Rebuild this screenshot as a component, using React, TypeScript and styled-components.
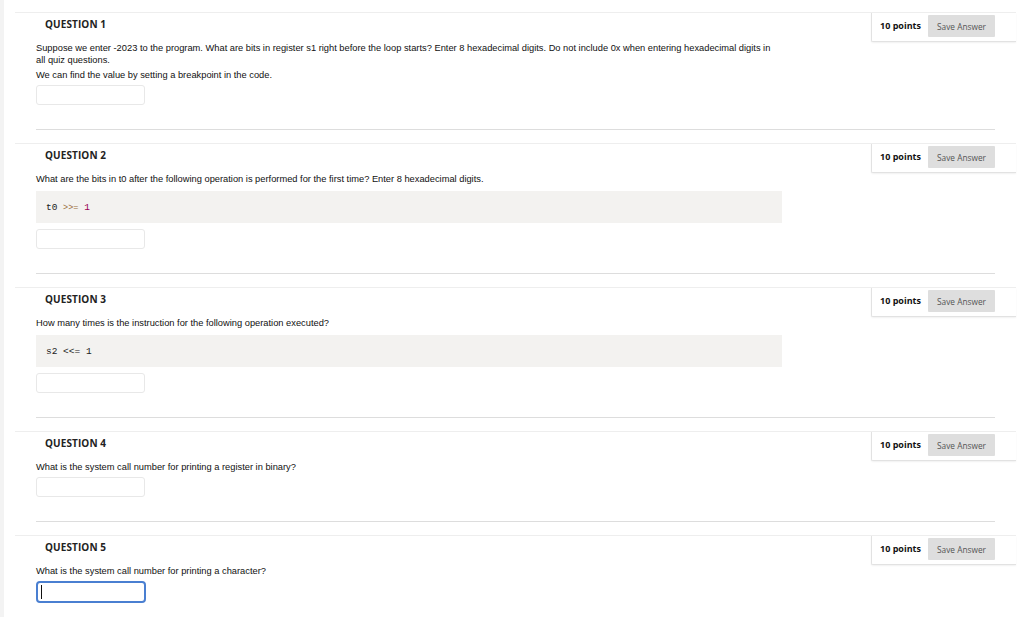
import React from "react";
import styled, { createGlobalStyle } from "styled-components";

const Global = createGlobalStyle`
  html, body { margin: 0; padding: 0; background: #ffffff; }
  body { font-family: "Liberation Sans", Arial, sans-serif; color: #111; }
  * { box-sizing: border-box; }
`;

const Page = styled.div`
  width: 1024px;
  min-height: 617px;
  border-left: 4px solid #f3f3f3;
  padding: 12px 8px 0 11px;
`;

const Question = styled.section`
  margin-bottom: 13px;
`;

const Header = styled.header`
  display: flex;
  justify-content: space-between;
  align-items: flex-start;
  border-top: 1px solid #eeeeee;
  height: 30px;
`;

const Title = styled.h2`
  margin: 0;
  padding: 4px 0 0 30px;
  font-family: "Open Sans", sans-serif;
  font-weight: 700;
  font-size: 10px;
  line-height: 14px;
  color: #222;
  letter-spacing: 0.1px;
`;

const PointsBox = styled.div`
  display: flex;
  align-items: center;
  gap: 7px;
  padding: 2px 21px 4px 8px;
  border-left: 1px solid #e2e2e2;
  border-bottom: 1px solid #e2e2e2;
  border-bottom-left-radius: 2px;
  box-shadow: 0 1px 2px rgba(0, 0, 0, 0.06);
  background: #fff;
`;

const Points = styled.span`
  font-family: "Open Sans", sans-serif;
  font-weight: 700;
  font-size: 9px;
  color: #111;
  line-height: 12px;
`;

const SaveButton = styled.button`
  width: 67px;
  height: 22px;
  border: none;
  border-radius: 1px;
  background: #dedede;
  color: #555;
  font-family: "Open Sans", sans-serif;
  font-size: 8.3px;
  padding: 0;
  cursor: pointer;
`;

const Body = styled.div`
  margin: 0 21px;
  padding-bottom: 24px;
  border-bottom: 1px solid #dddddd;
`;

const Text = styled.p<{ $gap?: number }>`
  margin: ${(p) => p.$gap ?? 0}px 0 0;
  max-width: 746px;
  font-size: 9.3px;
  line-height: 12px;
  color: #111;
`;

const CodeBlock = styled.pre`
  margin: 6px 0 0;
  width: 746px;
  height: 32px;
  padding: 0 10px;
  display: flex;
  align-items: center;
  background: #f3f2f0;
  font-family: "Liberation Mono", "DejaVu Sans Mono", monospace;
  font-size: 9.5px;
  color: #222;
`;

const CodeLine = styled.code`
  font-family: inherit;
  white-space: pre;
`;

const Op = styled.span`
  color: #9a6e3a;
  font-size: 8.5px;
`;

const Num = styled.span`
  color: #990055;
`;

const InputWrap = styled.div<{ $gap: number }>`
  position: relative;
  margin-top: ${(p) => p.$gap}px;
  width: 110px;
`;

const Answer = styled.input<{ $focused?: boolean }>`
  display: block;
  width: ${(p) => (p.$focused ? 110 : 109)}px;
  height: ${(p) => (p.$focused ? 22 : 20)}px;
  border: ${(p) => (p.$focused ? "2px solid #4a7fd1" : "1px solid #e8e8e8")};
  border-radius: ${(p) => (p.$focused ? 4 : 3)}px;
  outline: none;
  background: #fff;
  font-family: "Liberation Sans", Arial, sans-serif;
  font-size: 9px;
  padding: 0 4px;
`;

const Caret = styled.span`
  position: absolute;
  left: 5px;
  top: 4px;
  width: 1px;
  height: 14px;
  background: #111;
`;

type Q = {
  n: number;
  texts: string[];
  code?: React.ReactNode;
  focused?: boolean;
};

const questions: Q[] = [
  {
    n: 1,
    texts: [
      "Suppose we enter -2023 to the program. What are bits in register s1 right before the loop starts? Enter 8 hexadecimal digits. Do not include 0x when entering hexadecimal digits in all quiz questions.",
      "We can find the value by setting a breakpoint in the code.",
    ],
  },
  {
    n: 2,
    texts: [
      "What are the bits in t0 after the following operation is performed for the first time? Enter 8 hexadecimal digits.",
    ],
    code: (
      <>
        {"t0 "}
        <Op>&gt;&gt;=</Op>
        {" "}
        <Num>1</Num>
      </>
    ),
  },
  {
    n: 3,
    texts: ["How many times is the instruction for the following operation executed?"],
    code: <>{"s2 <<= 1"}</>,
  },
  {
    n: 4,
    texts: ["What is the system call number for printing a register in binary?"],
  },
  {
    n: 5,
    texts: ["What is the system call number for printing a character?"],
    focused: true,
  },
];

export default function App() {
  return (
    <>
      <Global />
      <Page>
        {questions.map((q) => (
          <Question key={q.n}>
            <Header>
              <Title>QUESTION {q.n}</Title>
              <PointsBox>
                <Points>10 points</Points>
                <SaveButton>Save Answer</SaveButton>
              </PointsBox>
            </Header>
            <Body>
              {q.texts.map((t, i) => (
                <Text key={i} $gap={i === 0 ? 0 : 3}>
                  {t}
                </Text>
              ))}
              {q.code && (
                <CodeBlock>
                  <CodeLine>{q.code}</CodeLine>
                </CodeBlock>
              )}
              <InputWrap $gap={q.code ? 6 : 4}>
                <Answer type="text" readOnly $focused={q.focused} />
                {q.focused && <Caret />}
              </InputWrap>
            </Body>
          </Question>
        ))}
      </Page>
    </>
  );
}
